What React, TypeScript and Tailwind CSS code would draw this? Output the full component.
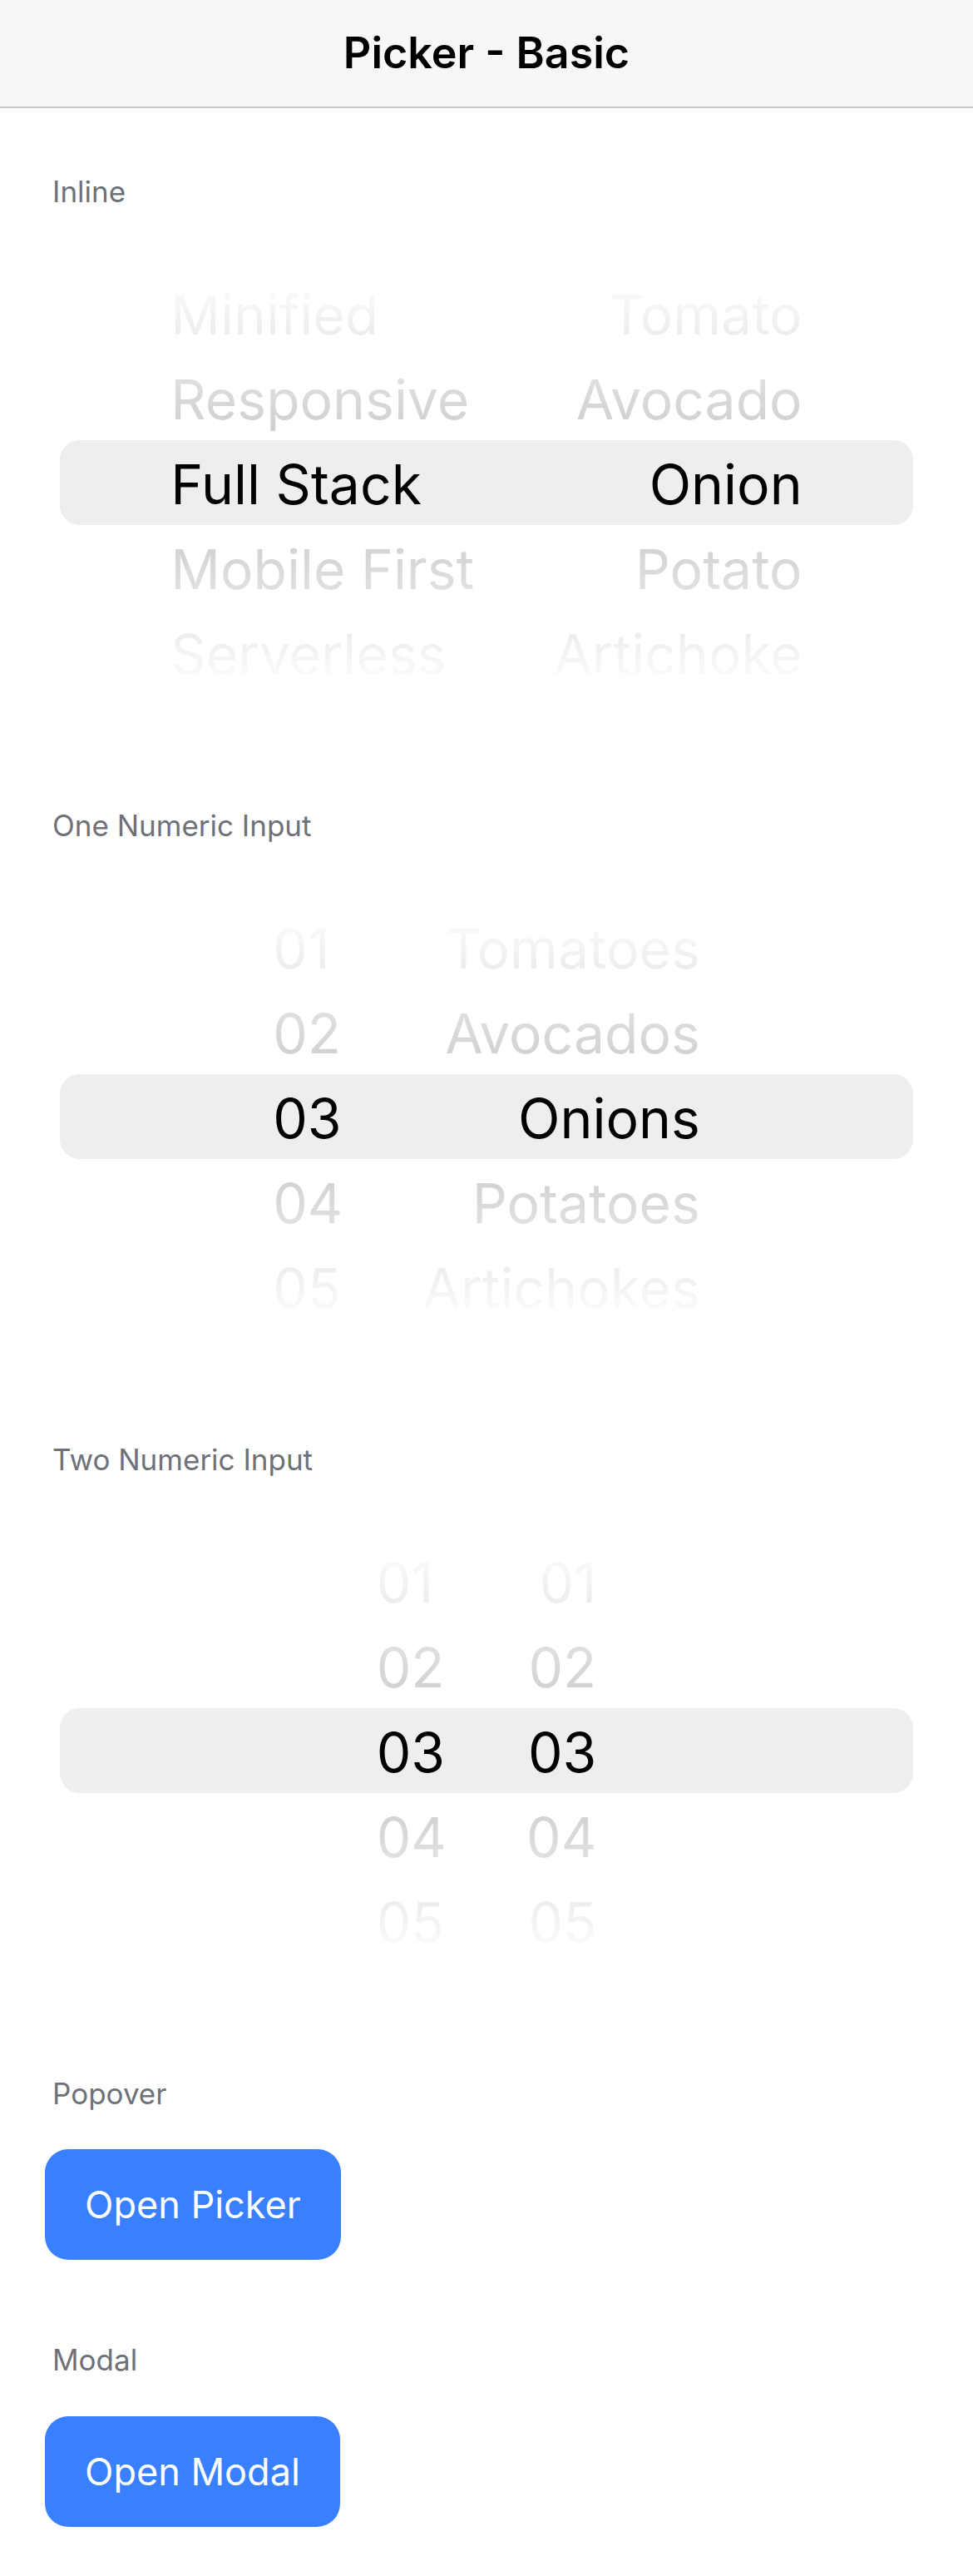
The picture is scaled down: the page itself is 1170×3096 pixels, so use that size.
import React from 'react'

type PickerProps = {
  columns: string[][]
}

const INLINE_COLUMNS = [
  ['Minified', 'Responsive', 'Full Stack', 'Mobile First', 'Serverless'],
  ['Tomato', 'Avocado', 'Onion', 'Potato', 'Artichoke'],
]

const ONE_NUMERIC_COLUMNS = [
  ['01', '02', '03', '04', '05'],
  ['Tomatoes', 'Avocados', 'Onions', 'Potatoes', 'Artichokes'],
]

const TWO_NUMERIC_COLUMNS = [
  ['01', '02', '03', '04', '05'],
  ['01', '02', '03', '04', '05'],
]

function Picker({ columns }: PickerProps) {
  return (
    <div className="relative mx-[72px] h-[600px] overflow-hidden">
      <div className="absolute inset-x-0 top-[249px] h-[102px] rounded-[24px] bg-[#eeeeef]" />

      <div className="relative flex h-full justify-center pt-[47px]">
        {columns.map((column, index) => (
          <div
            key={index}
            className={`flex flex-col px-[48px] ${index === 0 ? 'text-left' : 'text-right'}`}
          >
            {column.map((item) => (
              <div key={item} className="h-[102px] whitespace-nowrap text-[66px] leading-[102px] text-black">
                {item}
              </div>
            ))}
          </div>
        ))}
      </div>

      {/* fade above and below the selected row */}
      <div className="pointer-events-none absolute inset-x-0 top-0 h-[249px] bg-[linear-gradient(to_bottom,rgba(255,255,255,1)_20%,rgba(255,255,255,0.8)_100%)]" />
      <div className="pointer-events-none absolute inset-x-0 top-[351px] h-[249px] bg-[linear-gradient(to_top,rgba(255,255,255,1)_20%,rgba(255,255,255,0.8)_100%)]" />
    </div>
  )
}

function SectionLabel({ children, className = '' }: { children: React.ReactNode; className?: string }) {
  return <p className={`pl-[63px] text-[35px] leading-[44px] text-[#6e7178] ${className}`}>{children}</p>
}

function OpenButton({ label }: { label: string }) {
  return (
    <button
      type="button"
      className="ml-[54px] flex h-[133px] items-center rounded-[28px] bg-[#3880ff] px-[48px] text-[45px] text-white"
    >
      {label}
    </button>
  )
}

export default function App() {
  return (
    <div className="min-h-[3096px] bg-white font-['Inter',sans-serif]">
      <header className="flex h-[130px] items-center justify-center border-b-2 border-[#c9c9c9] bg-[#f7f7f7]">
        <h1 className="text-[52px] font-semibold text-black">Picker - Basic</h1>
      </header>

      <main>
        <SectionLabel className="mt-[78px]">Inline</SectionLabel>
        <div className="mt-[28px]">
          <Picker columns={INLINE_COLUMNS} />
        </div>

        <SectionLabel className="mt-[90px]">One Numeric Input</SectionLabel>
        <div className="mt-[28px]">
          <Picker columns={ONE_NUMERIC_COLUMNS} />
        </div>

        <SectionLabel className="mt-[90px]">Two Numeric Input</SectionLabel>
        <div className="mt-[28px]">
          <Picker columns={TWO_NUMERIC_COLUMNS} />
        </div>

        <SectionLabel className="mt-[90px]">Popover</SectionLabel>
        <div className="mt-[45px]">
          <OpenButton label="Open Picker" />
        </div>

        <SectionLabel className="mt-[98px]">Modal</SectionLabel>
        <div className="mt-[46px]">
          <OpenButton label="Open Modal" />
        </div>
      </main>
    </div>
  )
}
